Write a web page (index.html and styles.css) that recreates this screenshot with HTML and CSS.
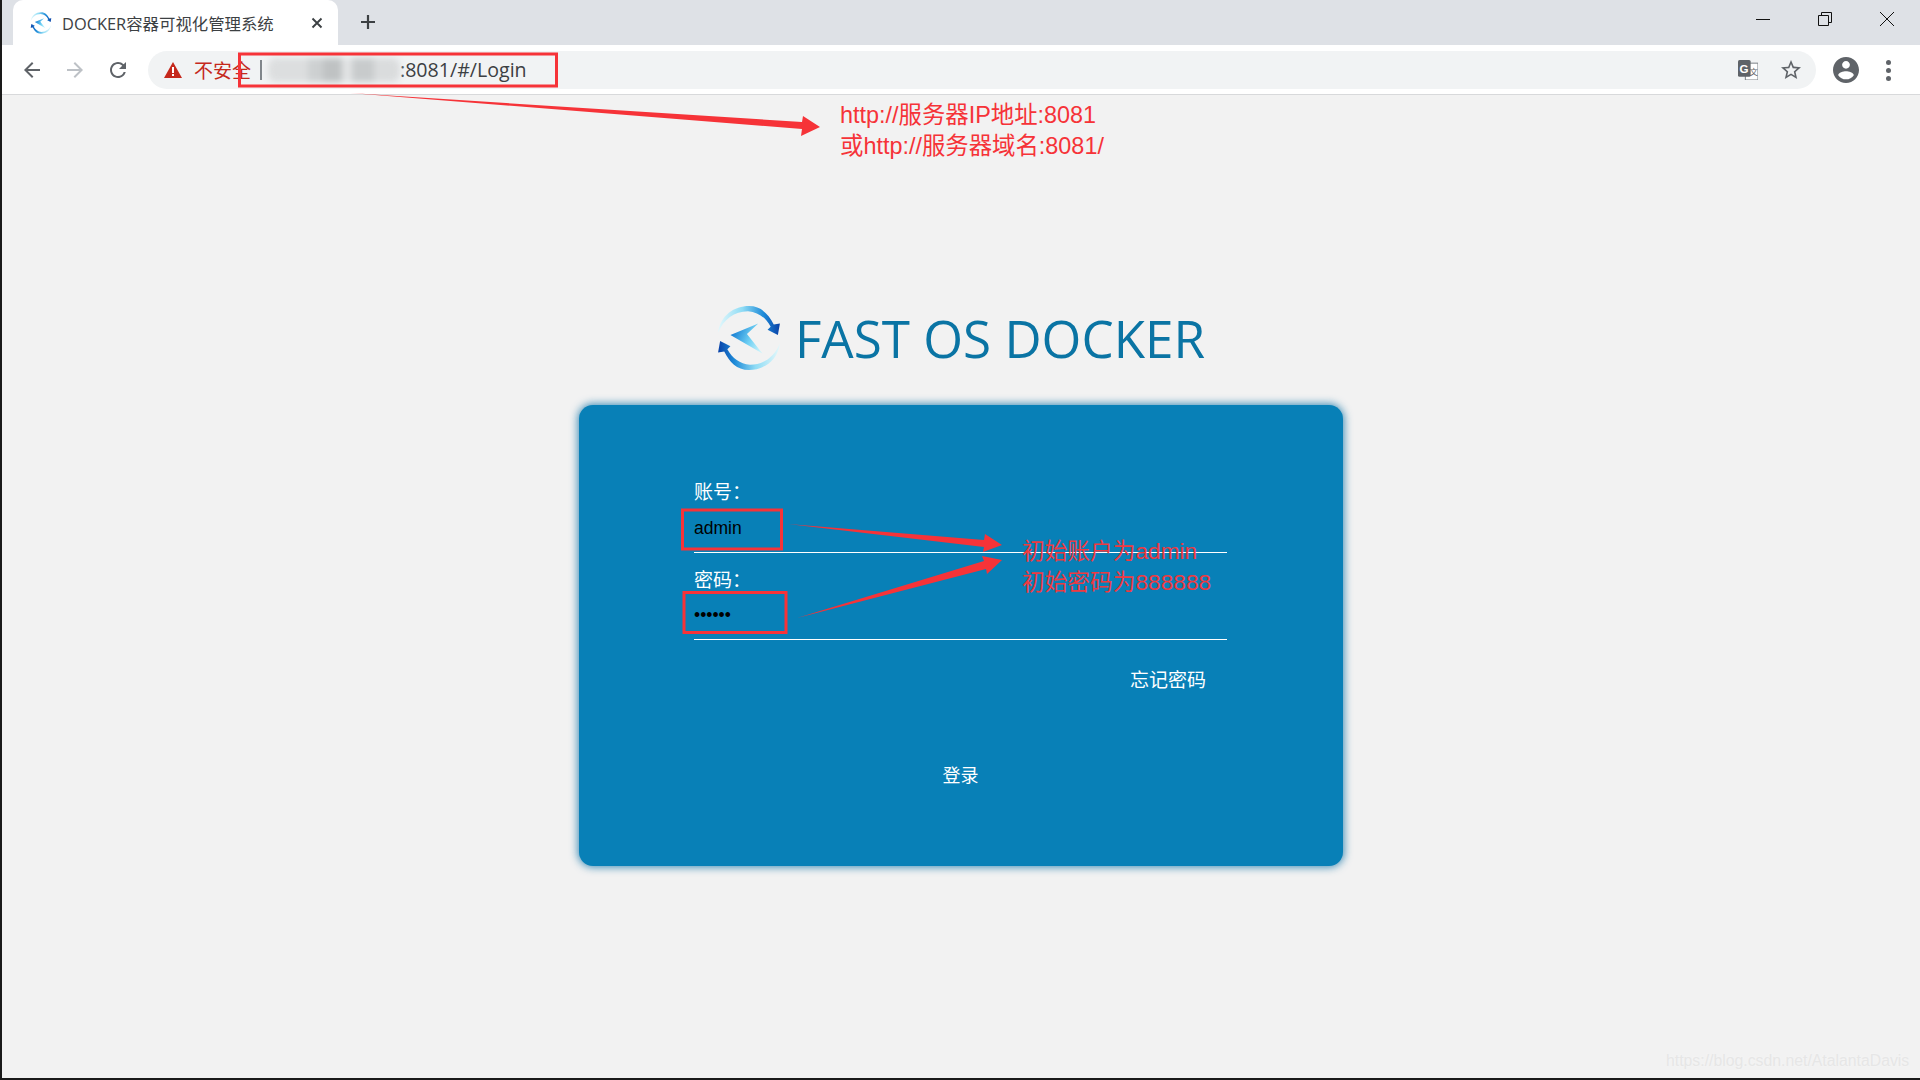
FILE: index.html
```html
<!DOCTYPE html>
<html lang="zh-CN">
<head>
<meta charset="UTF-8">
<meta name="viewport" content="width=device-width, initial-scale=1.0">
<title>DOCKER容器可视化管理系统</title>
<link rel="stylesheet" href="styles.css">
</head>
<body>
<svg class="defs" width="0" height="0">
    <defs>
        <linearGradient id="arcFill" gradientUnits="userSpaceOnUse" x1="1" y1="20" x2="60" y2="20">
            <stop offset="0" stop-color="#e4f8fb"/>
            <stop offset="0.4" stop-color="#8fdcf5"/>
            <stop offset="0.75" stop-color="#1d8ad8"/>
            <stop offset="1" stop-color="#0a45aa"/>
        </linearGradient>
        <linearGradient id="planeFill" gradientUnits="userSpaceOnUse" x1="13" y1="25" x2="44" y2="40">
            <stop offset="0" stop-color="#0a74cf"/>
            <stop offset="0.6" stop-color="#6fd0f4"/>
            <stop offset="1" stop-color="#c9f3fb"/>
        </linearGradient>
        <symbol id="logoMark" viewBox="0 0 62 64">
            <g id="logoArc">
                <path fill="url(#arcFill)" d="M1 27C3 10 17 1 31 1C43 1 50 9 55 19L61 18L59 29L49 24L52 21C47 12 40 7 30 6C17 6 6 14 1 27Z"/>
            </g>
            <use href="#logoArc" transform="rotate(180 31 32)"/>
            <path fill="url(#planeFill)" d="M40 18L13 29L44 47L29 28Z"/>
        </symbol>
    </defs>
</svg>

<div class="window">
    <div class="tabstrip">
        <div class="tab">
            <svg class="favicon"><use href="#logoMark"/></svg>
            <span class="tab_title">DOCKER容器可视化管理系统</span>
            <svg class="tab_close" viewBox="0 0 12 12"><path d="M1.5 1.5l9 9M10.5 1.5l-9 9"/></svg>
        </div>
        <svg class="new_tab" viewBox="0 0 16 16"><path d="M8 1v14M1 8h14"/></svg>
        <div class="win_btns">
            <svg viewBox="0 0 14 14"><path d="M0 7.5h14"/></svg>
            <svg viewBox="0 0 14 14"><path d="M.5 3.5h10v10H.5zM3.5 3.5V.5h10v10h-3"/></svg>
            <svg viewBox="0 0 14 14"><path d="M0 0l14 14M14 0L0 14"/></svg>
        </div>
    </div>

    <div class="toolbar">
        <div class="nav_btns">
            <svg viewBox="0 0 24 24"><path d="M20 11H7.83l5.59-5.59L12 4l-8 8 8 8 1.41-1.41L7.83 13H20v-2z"/></svg>
            <svg class="disabled" viewBox="0 0 24 24"><path d="M4 11h12.17l-5.59-5.59L12 4l8 8-8 8-1.41-1.41L16.17 13H4v-2z"/></svg>
            <svg viewBox="0 0 24 24"><path d="M17.65 6.35A7.958 7.958 0 0 0 12 4c-4.42 0-7.99 3.58-7.99 8s3.57 8 7.99 8c3.73 0 6.84-2.55 7.73-6h-2.08A5.99 5.99 0 0 1 12 18c-3.31 0-6-2.69-6-6s2.69-6 6-6c1.66 0 3.14.69 4.22 1.78L13 11h7V4l-2.35 2.35z"/></svg>
        </div>
        <div class="omnibox">
            <svg class="warn" viewBox="0 0 18 16"><path d="M9 0l9 16H0z"/><path class="warn_mark" d="M8 5h2v6H8zM8 12h2v2H8z"/></svg>
            <span class="insecure">不安全</span>
            <span class="divider"></span>
            <span class="blurred"></span>
            <span class="url">:8081/#/Login</span>
            <div class="omni_icons">
                <svg class="translate" viewBox="0 0 19 19">
                    <rect x="7" y="3" width="12" height="16" fill="#fff" stroke="#80868b"/>
                    <rect x="0" y="0" width="12" height="16" rx="1.5" fill="#5f6368"/>
                    <text x="1.5" y="12" class="tr_g">G</text>
                    <text x="11" y="14" class="tr_z">文</text>
                </svg>
                <svg class="star" viewBox="0 0 24 24"><path d="M22 9.24l-7.19-.62L12 2 9.19 8.63 2 9.24l5.46 4.73L5.82 21 12 17.27 18.18 21l-1.63-7.03L22 9.24zM12 15.4l-3.76 2.27 1-4.28-3.32-2.88 4.38-.38L12 6.1l1.71 4.04 4.38.38-3.32 2.88 1 4.28L12 15.4z"/></svg>
            </div>
        </div>
        <svg class="avatar" viewBox="2 2 20 20"><path d="M12 2C6.48 2 2 6.48 2 12s4.48 10 10 10 10-4.48 10-10S17.52 2 12 2zm0 3c1.66 0 3 1.34 3 3s-1.34 3-3 3-3-1.34-3-3 1.34-3 3-3zm0 14.2c-2.5 0-4.71-1.28-6-3.22.03-1.99 4-3.08 6-3.08 1.99 0 5.97 1.09 6 3.08-1.29 1.94-3.5 3.22-6 3.22z"/></svg>
        <div class="menu_dots"><i></i><i></i><i></i></div>
    </div>

    <div class="page">
        <div class="brand">
            <svg class="brand_logo"><use href="#logoMark"/></svg>
            <h1>FAST OS DOCKER</h1>
        </div>
        <form class="login_card">
            <label class="field">
                <span>账号：</span>
                <input type="text" value="admin">
            </label>
            <label class="field">
                <span>密码：</span>
                <input type="password" value="888888">
            </label>
            <a class="forgot">忘记密码</a>
            <a class="submit">登录</a>
        </form>
    </div>
</div>

<!-- 截图上的红色标注 -->
<svg class="marks" viewBox="0 0 1920 1080">
    <rect x="239.5" y="54" width="317" height="32"/>
    <rect x="682.5" y="510" width="99" height="39"/>
    <rect x="684" y="592.5" width="102" height="40"/>
    <polygon points="350,93 802,122 803,116 820,127 801,136 802,129"/>
    <polygon points="788,524 984,540 985,534 1002,545 983,552 984,547"/>
    <polygon points="797,618 984,561 982,556 1002,560 987,574 986,569"/>
</svg>
<div class="note note_url">http://服务器IP地址:8081<br>或http://服务器域名:8081/</div>
<div class="note note_login">初始账户为admin<br>初始密码为888888</div>
<div class="watermark">https://blog.csdn.net/AtalantaDavis</div>
</body>
</html>
```

FILE: styles.css
```css
* {margin: 0; padding: 0; box-sizing: border-box;}
html, body {height: 100%; overflow: hidden;}
body {font-family: "Open Sans", "Noto Sans CJK SC", sans-serif; background: #f2f2f2;}
.defs {position: absolute;}

.window {height: 1080px; display: flex; flex-direction: column; border-left: 2px solid #1a1a1a; border-bottom: 2px solid #1a1a1a;}

/* tab strip */
.tabstrip {height: 45px; flex: none; display: flex; align-items: center; padding-left: 11px; background: #dee1e6;}
.tab {width: 325px; height: 45px; display: flex; align-items: center; background: #fff; border-radius: 10px 10px 0 0; padding: 0 15px 0 17px;}
.favicon {width: 22px; height: 22px; flex: none;}
.tab_title {margin-left: 10px; font-size: 16.4px; color: #3c4043; white-space: nowrap;}
.tab_close {width: 12px; height: 12px; margin-left: auto; fill: none; stroke: #3c4043; stroke-width: 1.9;}
.new_tab {width: 16px; height: 16px; margin-left: 22px; margin-top: -1px; fill: none; stroke: #3c4043; stroke-width: 2.2;}
.win_btns {margin-left: auto; margin-top: -7px; padding-right: 26px; display: flex; gap: 48px;}
.win_btns svg {width: 14px; height: 14px; fill: none; stroke: #111; stroke-width: 1;}

/* toolbar */
.toolbar {height: 50px; flex: none; display: flex; align-items: flex-start; padding: 6px 0 0 18px; background: #fff; border-bottom: 1px solid #d8d9db;}
.nav_btns {display: flex; gap: 19px; padding-top: 7px;}
.nav_btns svg {width: 24px; height: 24px; fill: #5f6368;}
.nav_btns svg.disabled {fill: #bdc1c6;}
.omnibox {flex: 1; height: 38px; margin-left: 18px; display: flex; align-items: center; padding: 0 13px 0 16px; background: #f1f3f4; border-radius: 19px;}
.warn {width: 18px; height: 16px; flex: none; fill: #c5281c;}
.warn_mark {fill: #fff;}
.insecure {margin-left: 12px; font-size: 19px; color: #c5281c; white-space: nowrap;}
.divider {width: 2px; height: 20px; margin-left: 9px; background: #80868b;}
.blurred {width: 132px; height: 24px; margin-left: 6px; border-radius: 8px; filter: blur(3px);
    background: linear-gradient(90deg, #dcdedf 0 30%, #cdd0d1 30% 42%, #bfc2c3 42% 56%, #e2e4e5 56% 64%, #c8cbcc 64% 80%, #dadcdd 80% 100%);}
.url {margin-top: -1px; font-size: 19.6px; color: #3c4043; white-space: nowrap;}
.omni_icons {margin-left: auto; display: flex; align-items: center; gap: 21px;}
.translate {width: 20px; height: 20px;}
.star {width: 24px; height: 24px; fill: #5f6368;}
.tr_g {font: bold 11px "Liberation Sans", sans-serif; fill: #fff;}
.tr_z {font: 8px "Noto Sans CJK SC", sans-serif; fill: #5f6368;}
.avatar {width: 26px; height: 26px; margin: 6px 0 0 17px; fill: #5f6368;}
.menu_dots {display: flex; flex-direction: column; gap: 3px; margin: 9px 0 0 27px; padding-right: 29px;}
.menu_dots i {width: 5px; height: 5px; border-radius: 50%; background: #5f6368;}

/* login page */
.page {flex: 1; display: flex; flex-direction: column; align-items: center; padding-top: 211px; background: #f2f2f2;}
.brand {display: flex; align-items: center; gap: 14px; height: 64px;}
.brand_logo {width: 64px; height: 66px; flex: none;}
.brand h1 {font-size: 51.2px; font-weight: 400; color: #0a74a4; white-space: nowrap;}
.login_card {width: 764px; height: 461px; margin-top: 35px; padding: 76px 116px 0 115px; display: flex; flex-direction: column;
    background: #0880b7; border-radius: 14px; box-shadow: 0 0 8px 1px rgba(8, 110, 165, .8); color: #fff;}
.field {display: flex; flex-direction: column; margin-bottom: 16px;}
.field span {font-size: 19px; line-height: 22px;}
.field input {height: 50px; padding-top: 1px; border: 0; border-bottom: 1px solid #fff; background: transparent; outline: 0; color: #000; font: 17.5px "Liberation Sans", sans-serif;}
.field + .field input {height: 49px;}
.forgot {align-self: flex-end; margin: 11px 21px 0 0; font-size: 19px; line-height: 26px;}
.submit {align-self: center; margin-top: 69px; font-size: 18px; line-height: 26px;}

/* annotations drawn over the screenshot */
.marks {position: absolute; top: 0; left: 0; width: 1920px; height: 1080px; pointer-events: none;}
.marks rect {fill: none; stroke: #f63338; stroke-width: 3;}
.marks polygon {fill: #f63338;}
.note {position: absolute; line-height: 31px; white-space: nowrap; font-family: "Liberation Sans", "Noto Sans CJK SC", sans-serif;}
.note_url {left: 840px; top: 100px; font-size: 23.4px; color: #f63338;}
.note_login {left: 1022px; top: 536px; font-size: 22.7px; color: #ee3a41;}
.watermark {position: absolute; left: 1666px; top: 1052px; font: 15.8px "Liberation Sans", sans-serif; color: #e6e6e6; text-shadow: 0 0 2px #f7f7f7;}
```
